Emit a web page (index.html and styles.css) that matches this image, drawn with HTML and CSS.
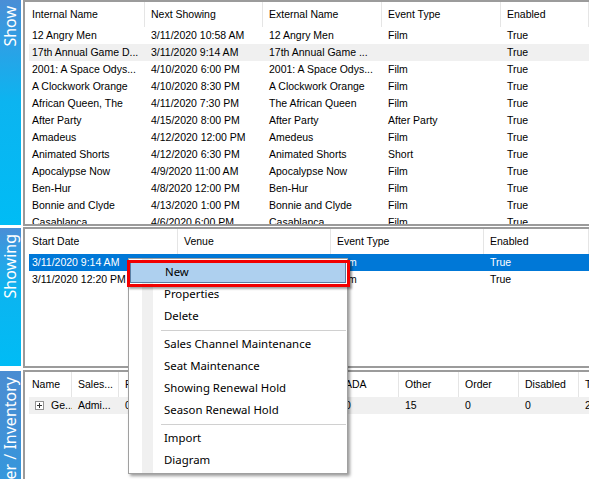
FILE: index.html
```html
<!DOCTYPE html>
<html>
<head>
<meta charset="utf-8">
<link rel="stylesheet" href="styles.css">
</head>
<body>
<div class="app">
  <section class="sec sec1">
    <div class="tab"><span class="tab-label">Show</span></div>
    <div class="panel">
      <div class="head g-show">
        <div class="hc first">Internal Name</div>
        <div class="hc">Next Showing</div>
        <div class="hc">External Name</div>
        <div class="hc">Event Type</div>
        <div class="hc">Enabled</div>
      </div>
      <div class="row r-show"><div class="c first">12 Angry Men</div><div class="c">3/11/2020 10:58 AM</div><div class="c">12 Angry Men</div><div class="c">Film</div><div class="c">True</div></div>
      <div class="row r-show hot"><div class="c first">17th Annual Game D...</div><div class="c">3/11/2020 9:14 AM</div><div class="c">17th Annual Game ...</div><div class="c"></div><div class="c">True</div></div>
      <div class="row r-show"><div class="c first">2001: A Space Odys...</div><div class="c">4/10/2020 6:00 PM</div><div class="c">2001: A Space Odys...</div><div class="c">Film</div><div class="c">True</div></div>
      <div class="row r-show"><div class="c first">A Clockwork Orange</div><div class="c">4/10/2020 8:30 PM</div><div class="c">A Clockwork Orange</div><div class="c">Film</div><div class="c">True</div></div>
      <div class="row r-show"><div class="c first">African Queen, The</div><div class="c">4/11/2020 7:30 PM</div><div class="c">The African Queen</div><div class="c">Film</div><div class="c">True</div></div>
      <div class="row r-show"><div class="c first">After Party</div><div class="c">4/15/2020 8:00 PM</div><div class="c">After Party</div><div class="c">After Party</div><div class="c">True</div></div>
      <div class="row r-show"><div class="c first">Amadeus</div><div class="c">4/12/2020 12:00 PM</div><div class="c">Amedeus</div><div class="c">Film</div><div class="c">True</div></div>
      <div class="row r-show"><div class="c first">Animated Shorts</div><div class="c">4/12/2020 6:30 PM</div><div class="c">Animated Shorts</div><div class="c">Short</div><div class="c">True</div></div>
      <div class="row r-show"><div class="c first">Apocalypse Now</div><div class="c">4/9/2020 11:00 AM</div><div class="c">Apocalypse Now</div><div class="c">Film</div><div class="c">True</div></div>
      <div class="row r-show"><div class="c first">Ben-Hur</div><div class="c">4/8/2020 12:00 PM</div><div class="c">Ben-Hur</div><div class="c">Film</div><div class="c">True</div></div>
      <div class="row r-show"><div class="c first">Bonnie and Clyde</div><div class="c">4/13/2020 1:00 PM</div><div class="c">Bonnie and Clyde</div><div class="c">Film</div><div class="c">True</div></div>
      <div class="row r-show"><div class="c first">Casablanca</div><div class="c">4/6/2020 6:00 PM</div><div class="c">Casablanca</div><div class="c">Film</div><div class="c">True</div></div>
    </div>
  </section>

  <section class="sec sec2">
    <div class="tab"><span class="tab-label">Showing</span></div>
    <div class="panel">
      <div class="head g-showing">
        <div class="hc first">Start Date</div>
        <div class="hc">Venue</div>
        <div class="hc">Event Type</div>
        <div class="hc">Enabled</div>
      </div>
      <div class="row r-showing sel"><div class="c first">3/11/2020 9:14 AM</div><div class="c">Uptown Theater</div><div class="c">Film</div><div class="c">True</div></div>
      <div class="row r-showing"><div class="c first">3/11/2020 12:20 PM</div><div class="c"></div><div class="c">Film</div><div class="c">True</div></div>
    </div>
  </section>

  <section class="sec sec3">
    <div class="tab"><span class="tab-label">er / Inventory</span></div>
    <div class="panel">
      <div class="head g-inv">
        <div class="hc first">Name</div>
        <div class="hc">Sales...</div>
        <div class="hc">P</div>
        <div class="hc"></div>
        <div class="hc"></div>
        <div class="hc"></div>
        <div class="hc">ADA</div>
        <div class="hc">Other</div>
        <div class="hc">Order</div>
        <div class="hc">Disabled</div>
        <div class="hc">T</div>
      </div>
      <div class="row r-inv hot">
        <div class="c first"><svg class="exp" width="9" height="9" viewBox="0 0 9 9"><rect x="0.5" y="0.5" width="8" height="8" fill="#fff" stroke="#919191"/><path d="M2 4.5h5M4.5 2v5" stroke="#333" stroke-width="1"/></svg>Ge...</div>
        <div class="c">Admi...</div>
        <div class="c">0</div>
        <div class="c"></div>
        <div class="c"></div>
        <div class="c"></div>
        <div class="c">0</div>
        <div class="c">15</div>
        <div class="c">0</div>
        <div class="c">0</div>
        <div class="c">2</div>
      </div>
    </div>
  </section>
</div>

<div class="menu">
  <div class="mi hl">New</div>
  <div class="mi">Properties</div>
  <div class="mi">Delete</div>
  <div class="msep"></div>
  <div class="mi">Sales Channel Maintenance</div>
  <div class="mi">Seat Maintenance</div>
  <div class="mi">Showing Renewal Hold</div>
  <div class="mi">Season Renewal Hold</div>
  <div class="msep"></div>
  <div class="mi">Import</div>
  <div class="mi">Diagram</div>
</div>
<div class="callout"></div>
</body>
</html>
```

FILE: styles.css
```css
html, body {
  margin: 0;
  padding: 0;
}
body {
  width: 589px;
  height: 479px;
  overflow: hidden;
  background: #fff;
  font-family: "Liberation Sans", Arial, sans-serif;
  font-size: 10.5px;
  color: #000;
  position: relative;
}
.app {
  display: flex;
  flex-direction: column;
  width: 589px;
  height: 479px;
  overflow: hidden;
}
.sec {
  display: flex;
  flex-direction: row;
  overflow: hidden;
  flex: none;
}
.sec1 { height: 226px; }
.sec2 { height: 141px; margin-top: 1px; }
.sec3 { height: 109px; margin-top: 2px; }

.tab {
  width: 21px;
  margin-right: 2px;
  flex: none;
  display: flex;
  flex-direction: column;
  align-items: center;
  background: linear-gradient(to bottom, #4a8ed6 0%, #2aa2e6 22%, #0cb4f0 45%, #00bcf5 100%);
  overflow: hidden;
}
.sec1 .tab { height: 225px; }
.sec2 .tab { height: 138px; margin-top: 1px; }
.sec3 .tab { height: 108px; margin-top: 1px; background: linear-gradient(to bottom, #4b8dd2 0%, #4290d6 50%, #3597dc 100%); }

.tab-label {
  writing-mode: vertical-rl;
  transform: rotate(180deg);
  font-family: "Noto Sans", "Open Sans", sans-serif;
  font-size: 16px;
  line-height: 21px;
  color: #fff;
  margin-top: 6px;
  white-space: nowrap;
  flex: none;
}

.panel {
  flex: 1;
  border-top: 2px solid #9b9b9b;
  border-left: 2px solid #9b9b9b;
  border-bottom: 2px solid #9b9b9b;
  background: #fff;
  overflow: hidden;
}
.sec3 .panel { border-bottom: none; }

.head {
  display: grid;
  height: 25px;
}
.hc {
  box-sizing: border-box;
  border-right: 1px solid #e5e5e5;
  padding-left: 6px;
  line-height: 24px;
  white-space: nowrap;
  overflow: hidden;
}
.hc.first { padding-left: 7px; }

.row {
  display: grid;
  height: 17px;
  margin-left: 4px;
}
.c {
  padding-left: 6px;
  line-height: 17px;
  white-space: nowrap;
  overflow: hidden;
}
.c.first { padding-left: 3px; }
.row.hot { background: #f0f0f0; }
.row.sel { background: #0078d7; color: #fff; }

.g-show { grid-template-columns: 120px 118px 119px 119px 1fr; }
.r-show { grid-template-columns: 116px 118px 119px 119px 1fr; }
.g-showing { grid-template-columns: 153px 153px 153px 1fr; }
.r-showing { grid-template-columns: 149px 153px 153px 1fr; }
.g-inv { grid-template-columns: 47px 47px 60px 60px 60px 40px 60px 60px 60px 60px 60px; }
.r-inv { grid-template-columns: 43px 47px 60px 60px 60px 40px 60px 60px 60px 60px 60px; }

.exp {
  vertical-align: -1px;
  margin-left: 3px;
  margin-right: 7px;
}

.menu {
  position: absolute;
  left: 128px;
  top: 258px;
  width: 218px;
  padding: 2px 0;
  border: 1px solid #a0a0a0;
  background: linear-gradient(to right, #ffffff 0 13px, #f0f0f0 13px 24px, #ffffff 24px);
  box-shadow: 2px 2px 3px rgba(0, 0, 0, 0.4);
  font-family: "Noto Sans", "Open Sans", sans-serif;
  font-size: 11.4px;
}
.mi {
  height: 22px;
  line-height: 22px;
  padding-left: 35px;
  white-space: nowrap;
}
.mi.hl {
  margin: 0 1px;
  padding-left: 34px;
  background: #aed0ef;
  box-sizing: border-box;
  border: 1px solid #5b7ea3;
  line-height: 20px;
}
.msep {
  height: 6px;
  position: relative;
}
.msep::after {
  content: "";
  position: absolute;
  left: 32px;
  right: 1px;
  top: 3px;
  border-top: 1px solid #d0d0d0;
}

.callout {
  position: absolute;
  left: 127px;
  top: 260px;
  width: 217px;
  height: 21px;
  border: 3px solid #f20000;
  box-shadow: 2px 2px 2px rgba(0, 0, 0, 0.35);
}
```
